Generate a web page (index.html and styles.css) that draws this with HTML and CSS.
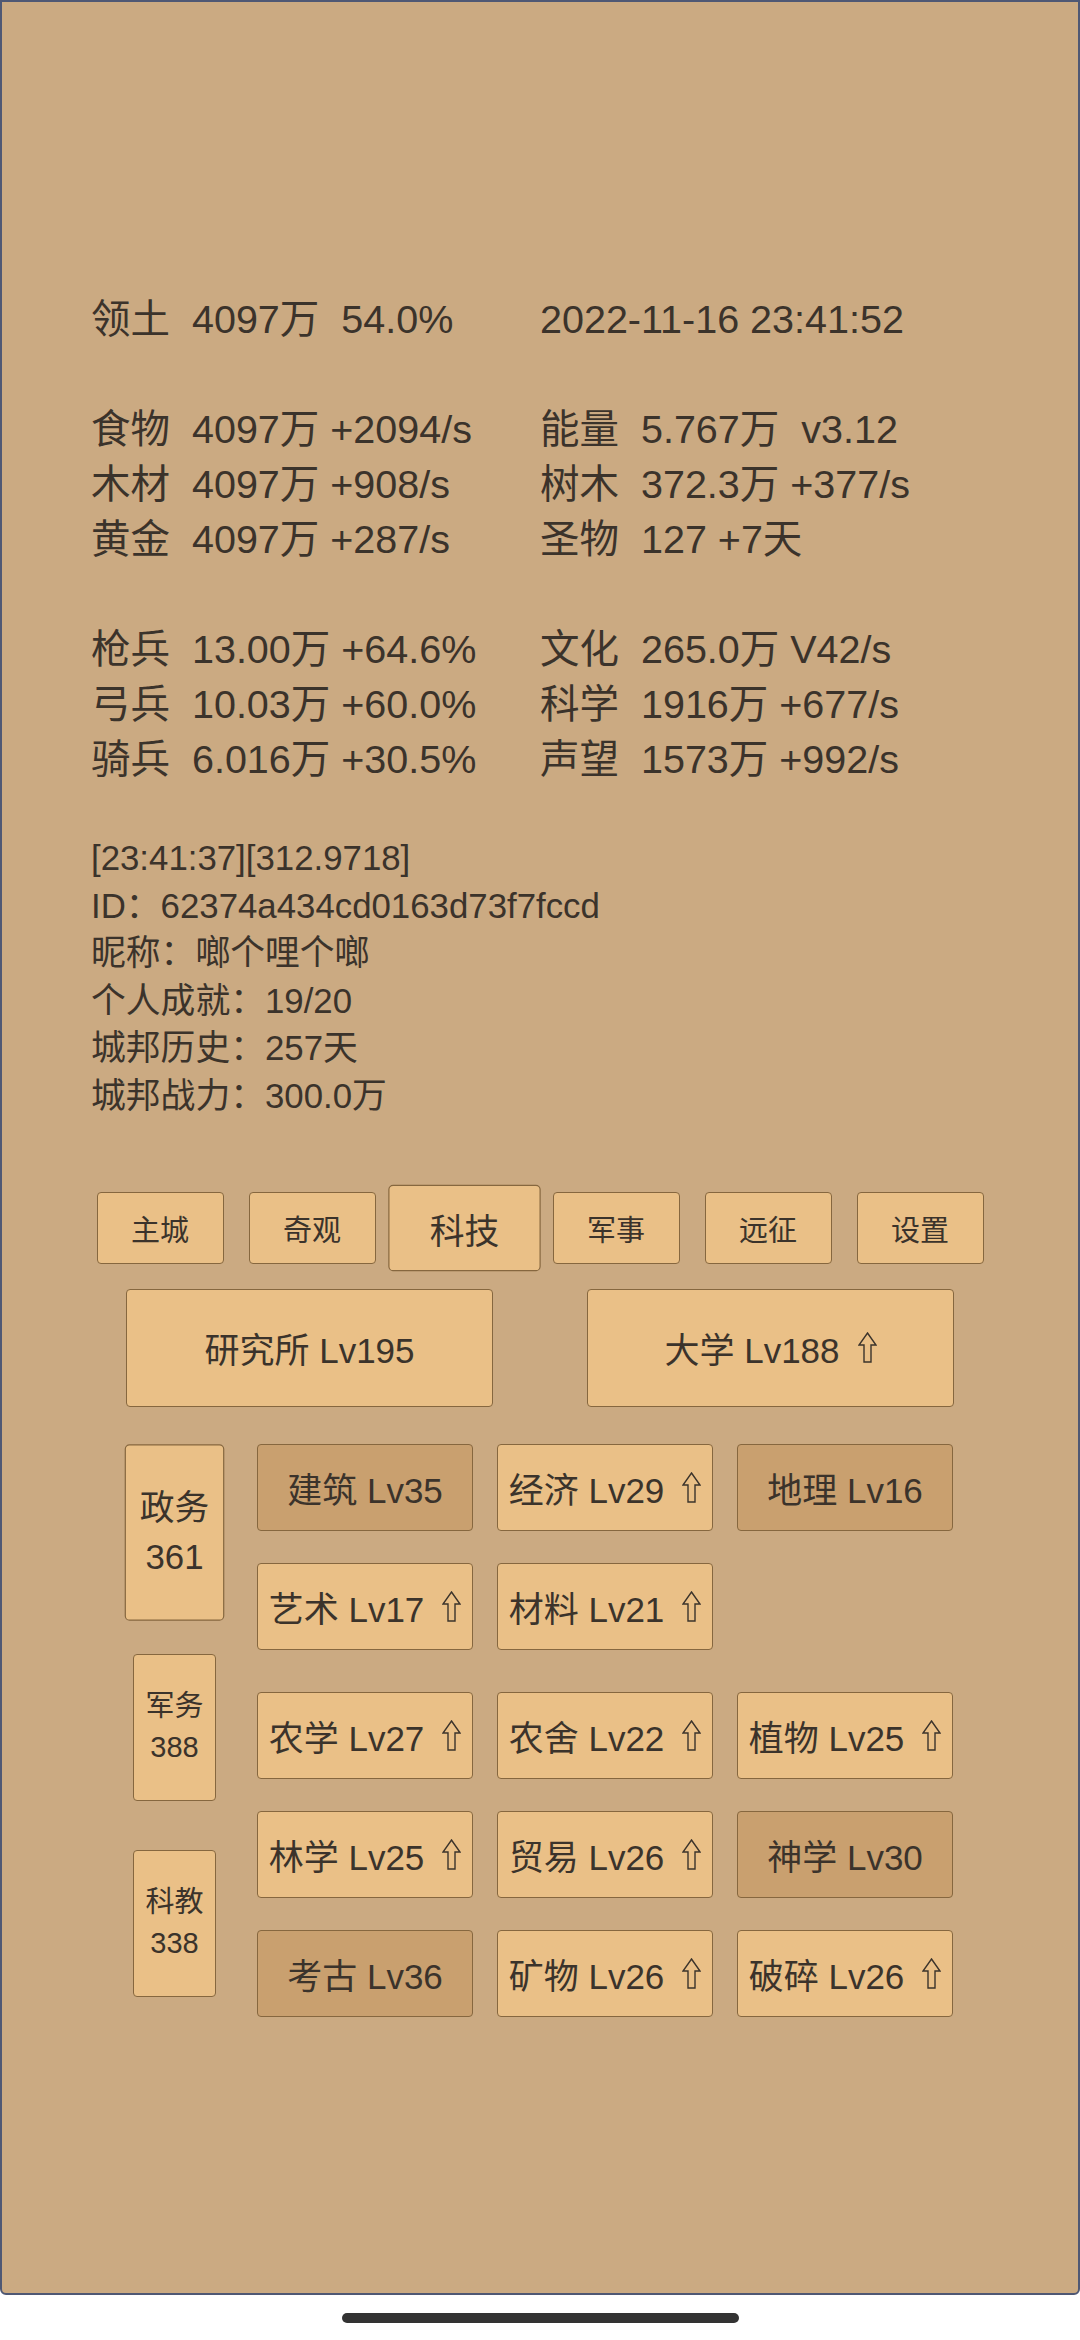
FILE: index.html
```html
<!DOCTYPE html>
<html>
<head>
    <title>城邦</title>
    <link rel="stylesheet" href="styles.css">
</head>
<body>
    <div class="panel">
        <div class="stats">
            <div class="cell">领土  4097万  54.0%</div>
            <div class="cell">2022-11-16 23:41:52</div>
            <div class="blank"></div>
            <div class="cell">食物  4097万 +2094/s</div>
            <div class="cell">能量  5.767万  v3.12</div>
            <div class="cell">木材  4097万 +908/s</div>
            <div class="cell">树木  372.3万 +377/s</div>
            <div class="cell">黄金  4097万 +287/s</div>
            <div class="cell">圣物  127 +7天</div>
            <div class="blank"></div>
            <div class="cell">枪兵  13.00万 +64.6%</div>
            <div class="cell">文化  265.0万 V42/s</div>
            <div class="cell">弓兵  10.03万 +60.0%</div>
            <div class="cell">科学  1916万 +677/s</div>
            <div class="cell">骑兵  6.016万 +30.5%</div>
            <div class="cell">声望  1573万 +992/s</div>
        </div>

        <div class="info">
            <div>[23:41:37][312.9718]</div>
            <div>ID：62374a434cd0163d73f7fccd</div>
            <div>昵称：啷个哩个啷</div>
            <div>个人成就：19/20</div>
            <div>城邦历史：257天</div>
            <div>城邦战力：300.0万</div>
        </div>

        <div class="nav">
            <div class="nav-btn">主城</div>
            <div class="nav-btn">奇观</div>
            <div class="nav-btn active">科技</div>
            <div class="nav-btn">军事</div>
            <div class="nav-btn">远征</div>
            <div class="nav-btn">设置</div>
        </div>

        <div class="halls">
            <div class="btn hall">研究所 Lv195</div>
            <div class="btn hall">大学 Lv188<svg class="up" viewBox="0 0 19 31"><path d="M9.5 1 L18 13 L13 13 L13 30 L6 30 L6 13 L1 13 Z"/></svg></div>
        </div>

        <div class="tech">
            <div class="group g1">
                <div class="cat active">政务<br>361</div>
                <div class="grid">
                    <div class="btn dim">建筑 Lv35</div>
                    <div class="btn">经济 Lv29<svg class="up" viewBox="0 0 19 31"><path d="M9.5 1 L18 13 L13 13 L13 30 L6 30 L6 13 L1 13 Z"/></svg></div>
                    <div class="btn dim">地理 Lv16</div>
                    <div class="btn">艺术 Lv17<svg class="up" viewBox="0 0 19 31"><path d="M9.5 1 L18 13 L13 13 L13 30 L6 30 L6 13 L1 13 Z"/></svg></div>
                    <div class="btn">材料 Lv21<svg class="up" viewBox="0 0 19 31"><path d="M9.5 1 L18 13 L13 13 L13 30 L6 30 L6 13 L1 13 Z"/></svg></div>
                </div>
            </div>
            <div class="group g2">
                <div class="cat">军务<br>388</div>
                <div class="grid">
                    <div class="btn">农学 Lv27<svg class="up" viewBox="0 0 19 31"><path d="M9.5 1 L18 13 L13 13 L13 30 L6 30 L6 13 L1 13 Z"/></svg></div>
                    <div class="btn">农舍 Lv22<svg class="up" viewBox="0 0 19 31"><path d="M9.5 1 L18 13 L13 13 L13 30 L6 30 L6 13 L1 13 Z"/></svg></div>
                    <div class="btn">植物 Lv25<svg class="up" viewBox="0 0 19 31"><path d="M9.5 1 L18 13 L13 13 L13 30 L6 30 L6 13 L1 13 Z"/></svg></div>
                </div>
            </div>
            <div class="group g3">
                <div class="cat">科教<br>338</div>
                <div class="grid">
                    <div class="btn">林学 Lv25<svg class="up" viewBox="0 0 19 31"><path d="M9.5 1 L18 13 L13 13 L13 30 L6 30 L6 13 L1 13 Z"/></svg></div>
                    <div class="btn">贸易 Lv26<svg class="up" viewBox="0 0 19 31"><path d="M9.5 1 L18 13 L13 13 L13 30 L6 30 L6 13 L1 13 Z"/></svg></div>
                    <div class="btn dim">神学 Lv30</div>
                    <div class="btn dim">考古 Lv36</div>
                    <div class="btn">矿物 Lv26<svg class="up" viewBox="0 0 19 31"><path d="M9.5 1 L18 13 L13 13 L13 30 L6 30 L6 13 L1 13 Z"/></svg></div>
                    <div class="btn">破碎 Lv26<svg class="up" viewBox="0 0 19 31"><path d="M9.5 1 L18 13 L13 13 L13 30 L6 30 L6 13 L1 13 Z"/></svg></div>
                </div>
            </div>
        </div>
    </div>

    <div class="home">
        <div class="home-bar"></div>
    </div>
</body>
</html>
```

FILE: styles.css
```css
body {
    margin: 0;
    background: #fff;
    font-family: "Liberation Sans", "Noto Sans CJK SC", sans-serif;
    color: #3b332b;
}
.panel {
    height: 2295px;
    box-sizing: border-box;
    background: #cbaa82;
    border: 2px solid #4f5874;
    border-radius: 0 0 6px 6px;
    padding: 290px 89px 0;
}
.stats {
    display: grid;
    grid-template-columns: 1fr 1fr;
    font-size: 39.5px;
    line-height: 55px;
}
.cell {
    white-space: pre;
}
.blank {
    grid-column: 1 / 3;
    height: 55px;
}
.info {
    margin-top: 47px;
    font-size: 34.8px;
    line-height: 47.6px;
}
.nav {
    margin: 72px -30px 0;
    display: flex;
    justify-content: center;
}
.nav-btn {
    width: 127px;
    height: 72px;
    margin: 0 12.5px;
    box-sizing: border-box;
    display: flex;
    align-items: center;
    justify-content: center;
    font-size: 29px;
    background: #eac087;
    border: 1px solid #86673f;
    border-radius: 4px;
}
.nav-btn.active {
    transform: scale(1.2);
}
.btn {
    box-sizing: border-box;
    display: flex;
    align-items: center;
    justify-content: center;
    font-size: 35px;
    background: #eac087;
    border: 1px solid #86673f;
    border-radius: 4px;
}
.btn.dim {
    background: #c9a06f;
}
.up {
    width: 19px;
    height: 31px;
    margin-left: 18px;
    fill: none;
    stroke: #3b332b;
    stroke-width: 1.4;
}
.halls {
    margin-top: 25px;
    display: flex;
    justify-content: center;
    gap: 94px;
}
.hall {
    width: 367px;
    height: 118px;
}
.tech {
    margin-top: 37px;
    padding-left: 42px;
}
.group {
    display: flex;
    align-items: flex-start;
    gap: 41px;
}
.cat {
    width: 83px;
    height: 147px;
    box-sizing: border-box;
    display: flex;
    align-items: center;
    justify-content: center;
    text-align: center;
    font-size: 29px;
    line-height: 1.4;
    background: #eac087;
    border: 1px solid #86673f;
    border-radius: 4px;
}
.cat.active {
    transform: scale(1.2);
}
.grid {
    display: grid;
    grid-template-columns: repeat(3, 216px);
    grid-auto-rows: 87px;
    gap: 32px 24px;
}
.g1 .cat {
    margin-top: 15px;
}
.g2 {
    margin-top: 4px;
}
.g2 .grid {
    margin-top: 38px;
}
.g3 {
    margin-top: 10px;
}
.g3 .cat {
    margin-top: 39px;
}
.home {
    height: 45px;
    display: flex;
    justify-content: center;
    padding-top: 18px;
    box-sizing: border-box;
}
.home-bar {
    width: 397px;
    height: 10px;
    border-radius: 5px;
    background: #333;
}
```
